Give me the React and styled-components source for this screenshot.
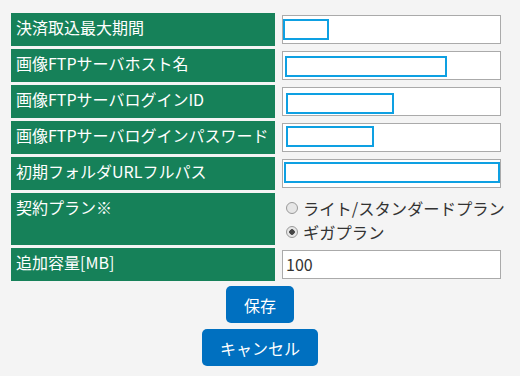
import React from 'react';
import styled, { createGlobalStyle } from 'styled-components';

const GlobalStyle = createGlobalStyle`
    body {
        margin: 8px;
        background: #f4f4f4;
        font-family: "Noto Sans CJK JP", "Noto Sans", sans-serif;
        color: #333;
    }
`;

const Form = styled.div`
    display: flex;
    flex-direction: column;
    align-items: center;
    padding-top: 2px;
`;

const Table = styled.table`
    border-spacing: 3px;
    align-self: flex-start;
`;

const Label = styled.td`
    background: #168159;
    color: #fff;
    width: 264px;
    min-width: 264px;
    height: ${p => p.$tall ? 52 : 33}px;
    padding: 3px 5px 0;
    font-size: 16px;
    line-height: 22px;
    vertical-align: top;
    box-sizing: border-box;
    white-space: nowrap;
    overflow: hidden;
`;

const Value = styled.td`
    width: 223px;
    padding: 0 0 0 4px;
    vertical-align: middle;
`;

const InputBox = styled.div`
    width: 219px;
    height: 29px;
    box-sizing: border-box;
    border: 1px solid #aaa;
    background: #fff;
    display: flex;
    align-items: flex-start;
    font-size: 16px;
    line-height: 27px;
    padding-left: 3px;
`;

const Inner = styled.div`
    width: ${p => p.$w}px;
    height: 21px;
    margin-left: ${p => p.$x}px;
    margin-top: ${p => p.$y}px;
    box-sizing: border-box;
    border: 2px solid #0ea0e2;
`;

const Radios = styled.div`
    display: flex;
    flex-direction: column;
    padding-top: 1px;
`;

const RadioRow = styled.label`
    display: flex;
    align-items: center;
    gap: 5px;
    height: 24px;
    font-size: 16.3px;
    white-space: nowrap;
    padding-left: 4px;
`;

const Dot = styled.span`
    width: 12px;
    height: 12px;
    border-radius: 50%;
    border: 1px solid #999;
    background: radial-gradient(circle, ${p => p.$on ? '#444 0 2.5px, #e6e6e6 3px' : '#e6e6e6 0'});
    box-sizing: border-box;
`;

const Button = styled.button`
    background: #0070c0;
    color: #fff;
    border: none;
    border-radius: 5px;
    height: 37px;
    padding: 0 18px;
    font-family: inherit;
    font-size: 16px;
    margin-top: ${p => p.$gap}px;
`;

const rows = [
    { label: '決済取込最大期間', inner: { x: 0, y: 3, w: 46 } },
    { label: '画像FTPサーバホスト名', inner: { x: 2, y: 4, w: 162 } },
    { label: '画像FTPサーバログインID', inner: { x: 3, y: 5, w: 108 } },
    { label: '画像FTPサーバログインパスワード', inner: { x: 3, y: 2, w: 88 } },
    { label: '初期フォルダURLフルパス', inner: { x: 1, y: 2, w: 216 } },
];

export default function App() {
    return (
        <Form>
            <GlobalStyle />
            <Table>
                <tbody>
                    {rows.map(r => (
                        <tr key={r.label}>
                            <Label>{r.label}</Label>
                            <Value>
                                <InputBox>
                                    <Inner $x={r.inner.x - 3} $y={r.inner.y} $w={r.inner.w} />
                                </InputBox>
                            </Value>
                        </tr>
                    ))}
                    <tr>
                        <Label $tall>契約プラン※</Label>
                        <Value>
                            <Radios>
                                <RadioRow><Dot />ライト/スタンダードプラン</RadioRow>
                                <RadioRow><Dot $on />ギガプラン</RadioRow>
                            </Radios>
                        </Value>
                    </tr>
                    <tr>
                        <Label>追加容量[MB]</Label>
                        <Value>
                            <InputBox>100</InputBox>
                        </Value>
                    </tr>
                </tbody>
            </Table>
            <Button $gap={2}>保存</Button>
            <Button $gap={6}>キャンセル</Button>
        </Form>
    );
}
